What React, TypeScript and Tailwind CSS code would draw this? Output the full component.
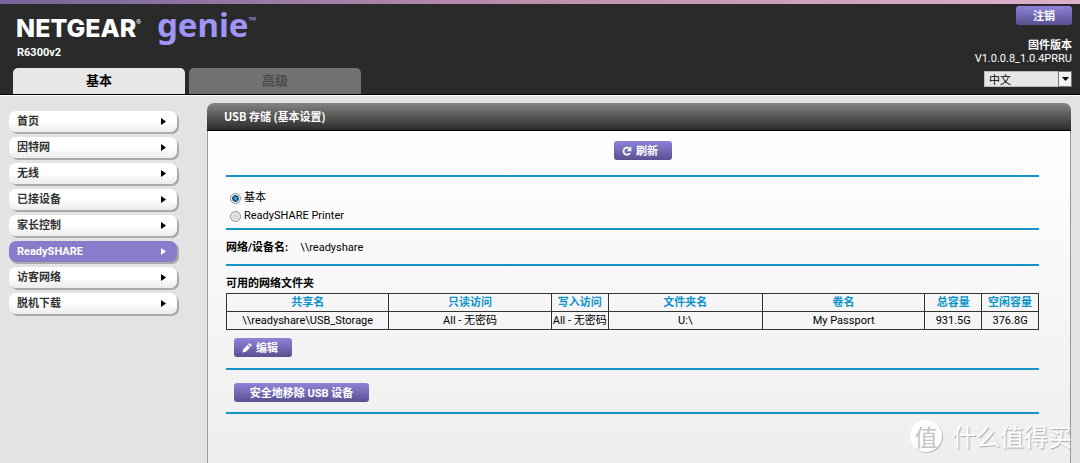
import { useState } from "react";
import type { ReactNode } from "react";
import clsx from "clsx";

type MenuItem = {
  id: string;
  label: string;
};

type Folder = {
  share: string;
  read: string;
  write: string;
  folder: string;
  volume: string;
  total: string;
  free: string;
};

const menuItems: MenuItem[] = [
  { id: "home", label: "首页" },
  { id: "internet", label: "因特网" },
  { id: "wireless", label: "无线" },
  { id: "devices", label: "已接设备" },
  { id: "parental", label: "家长控制" },
  { id: "readyshare", label: "ReadySHARE" },
  { id: "guest", label: "访客网络" },
  { id: "downloader", label: "脱机下载" },
];

const columns: { key: keyof Folder; label: string; width: string }[] = [
  { key: "share", label: "共享名", width: "w-[20%]" },
  { key: "read", label: "只读访问", width: "w-[20%]" },
  { key: "write", label: "写入访问", width: "w-[7%]" },
  { key: "folder", label: "文件夹名", width: "w-[19%]" },
  { key: "volume", label: "卷名", width: "w-[20%]" },
  { key: "total", label: "总容量", width: "w-[7%]" },
  { key: "free", label: "空闲容量", width: "w-[7%]" },
];

const folders: Folder[] = [
  {
    share: "\\\\readyshare\\USB_Storage",
    read: "All - 无密码",
    write: "All - 无密码",
    folder: "U:\\",
    volume: "My Passport",
    total: "931.5G",
    free: "376.8G",
  },
];

const RefreshIcon = () => (
  <svg className="size-[10px]" viewBox="0 0 10 10" fill="none">
    <path
      d="M8 7.300A3.600 3.600 0 1 1 7.300 2.300"
      stroke="#fff"
      strokeWidth="1.8"
    />
    <path d="M9.400.4v4.800H4.600z" fill="#fff" />
  </svg>
);

const PencilIcon = () => (
  <svg className="size-[10px]" viewBox="0 0 10 10" fill="#fff">
    <path d="M.4 9.600l.9-3.400L5.500 2l2.500 2.500L3.800 8.700z" />
    <path d="M6.200 1.300L7.500 0l2.500 2.500L8.700 3.800z" />
  </svg>
);

const Button = ({
  className,
  children,
}: {
  className?: string;
  children: ReactNode;
}) => (
  <button
    className={clsx(
      "flex h-[19px] items-center gap-1 rounded-[3px] bg-linear-to-b from-[#8f83d8] to-[#5a5192] pt-px text-[11px] leading-none font-bold text-white",
      className
    )}
  >
    {children}
  </button>
);

const Divider = () => <hr className="h-[2px] border-0 bg-[#1594c8]" />;

const Header = () => (
  <header className="flex h-[91px] justify-between border-b border-black bg-[#2a2a2a] text-white">
    <div className="flex flex-col justify-between">
      <div className="pl-4">
        <div className="flex h-[42px] items-baseline gap-4 leading-[42px]">
          <span className="flex font-[Inter] text-[25px] font-extrabold">
            NETGEAR
            <sup className="top-0 self-start text-[7px] leading-8">®</sup>
          </span>
          <span className="flex font-['Noto_Sans'] text-[33px] font-bold text-[#9f95f7]">
            genie
            <sup className="top-0 self-start text-[10px] leading-8">™</sup>
          </span>
        </div>
        <div className="pl-px text-[11px] leading-[14px] font-bold">
          R6300v2
        </div>
      </div>
      <nav className="flex gap-1 pl-[13px] text-[13px] font-bold">
        <button className="h-[26px] w-[172px] rounded-t-[5px] bg-[#e6e7e6] text-black">
          基本
        </button>
        <button className="h-[26px] w-[172px] rounded-t-[5px] bg-[#707270] text-[#4c4d4c]">
          高级
        </button>
      </nav>
    </div>
    <div className="flex flex-col items-end pt-[2px] pr-2 text-[11px]">
      <Button className="w-14 justify-center">注销</Button>
      <div className="pt-[14px] leading-[13px] font-bold">固件版本</div>
      <div className="leading-[13px]">V1.0.0.8_1.0.4PRRU</div>
      <div className="relative mt-[6px]">
        <select
          aria-label="语言"
          className="block h-4 w-[88px] appearance-none border border-[#bbb] bg-[#e6e6e6] pl-1 font-['Noto_Sans_CJK_SC',sans-serif] text-[11px] leading-[14px] text-black"
        >
          <option>中文</option>
          <option>English</option>
        </select>
        <span className="pointer-events-none absolute inset-y-0 right-0 flex w-[14px] items-center justify-center border border-[#777] bg-[#f2f2f2]">
          <svg className="h-[4px] w-[7px]" viewBox="0 0 7 4">
            <path d="M0 0h7L3.500 4z" />
          </svg>
        </span>
      </div>
    </div>
  </header>
);

const Sidebar = ({
  active,
  onSelect,
}: {
  active: string;
  onSelect: (id: string) => void;
}) => (
  <aside className="w-[207px] shrink-0 pt-[15px] pl-[9px]">
    <ul className="flex w-[168px] flex-col gap-[5px]">
      {menuItems.map(({ id, label }) => (
        <li key={id}>
          <button
            onClick={() => onSelect(id)}
            className={clsx(
              "flex h-[21px] w-full items-center justify-between rounded-[7px] pr-[11px] pl-2 text-[11px] leading-none font-bold shadow-[2px_2px_0_#aaa]",
              id === active
                ? "bg-[#887dca] text-white"
                : "bg-linear-to-b from-white from-50% to-[#ececec] text-[#333]"
            )}
          >
            {label}
            <svg
              className={clsx(
                "h-[7px] w-[5px]",
                id === active ? "fill-white" : "fill-black"
              )}
              viewBox="0 0 5 7"
            >
              <path d="M0 0l5 3.500L0 7z" />
            </svg>
          </button>
        </li>
      ))}
    </ul>
  </aside>
);

const FolderTable = () => (
  <table className="w-full table-fixed border-collapse text-center leading-[17px]">
    <thead>
      <tr>
        {columns.map(({ key, label, width }) => (
          <th
            key={key}
            className={clsx(
              "border border-[#333] p-0 whitespace-nowrap text-[#0d93cc]",
              width
            )}
          >
            {label}
          </th>
        ))}
      </tr>
    </thead>
    <tbody>
      {folders.map((folder) => (
        <tr key={folder.share}>
          {columns.map(({ key }) => (
            <td
              key={key}
              className="border border-[#333] p-0 whitespace-nowrap"
            >
              {folder[key]}
            </td>
          ))}
        </tr>
      ))}
    </tbody>
  </table>
);

const Radio = ({
  label,
  checked,
  onChange,
}: {
  label: string;
  checked: boolean;
  onChange: () => void;
}) => (
  <label className="flex h-[18px] items-center gap-[3px] pl-1">
    <input
      type="radio"
      name="mode"
      checked={checked}
      onChange={onChange}
      className="size-[11px] appearance-none rounded-full border border-[#8e8f8f] bg-[#dcdcdc] shadow-[inset_0_0_0_1px_#f4f4f4] checked:bg-[radial-gradient(circle,#58c4ee_0,#123f6b_3px,#f4f4f4_4px)]"
    />
    {label}
  </label>
);

const Watermark = () => (
  <div className="absolute right-2 bottom-[9px] flex items-center gap-[10px] font-['Noto_Sans_CJK_SC',sans-serif] text-white">
    <span className="flex size-8 items-center justify-center rounded-full bg-white text-[23px] leading-none text-[#c4c4c4] shadow-[1px_1px_1px_#bbb]">
      值
    </span>
    <span className="text-[24px] leading-9 [text-shadow:1px_1px_1px_#aaa]">
      什么值得买
    </span>
  </div>
);

const App = () => {
  const [active, setActive] = useState<string>("readyshare");
  const [mode, setMode] = useState<string>("basic");

  return (
    <div className="relative flex min-h-screen flex-col bg-[#e3e3e3] font-[Roboto,'Noto_Sans_CJK_SC',sans-serif] text-[11px] text-black">
      <div className="h-1 bg-linear-to-r from-[#75659a] via-[#c08fae] to-[#dcb2ca]" />
      <Header />
      <div className="flex flex-1 border-t border-white">
        <Sidebar active={active} onSelect={setActive} />
        <main className="mt-[7px] mr-[9px] flex flex-1 flex-col">
          <h1 className="h-7 rounded-t-[7px] border-b border-black bg-linear-to-b from-[#858585] to-[#2c2c2c] pl-[17px] font-['Noto_Sans_CJK_SC',sans-serif] leading-[26px] font-bold text-white">
            USB 存储 (基本设置)
          </h1>
          <div className="flex-1 border-x border-[#999] bg-linear-to-b from-white to-[#eee] pt-[10px] pr-[31px] pl-[18px]">
            <div className="flex justify-center pb-[15px] pl-[21px]">
              <Button className="w-[58px] pl-2">
                <RefreshIcon />
                刷新
              </Button>
            </div>
            <Divider />
            <div className="pt-3 pb-[3px]">
              <Radio
                label="基本"
                checked={mode === "basic"}
                onChange={() => setMode("basic")}
              />
              <Radio
                label="ReadySHARE Printer"
                checked={mode === "printer"}
                onChange={() => setMode("printer")}
              />
            </div>
            <Divider />
            <div className="flex h-[34px] items-center gap-3 pt-[2px]">
              <span className="font-bold">网络/设备名:</span>
              <span>\\readyshare</span>
            </div>
            <Divider />
            <div className="pt-[9px] pb-[11px]">
              <h2 className="leading-[18px] font-bold">可用的网络文件夹</h2>
              <FolderTable />
              <div className="pt-2 pl-2">
                <Button className="w-[58px] pl-2">
                  <PencilIcon />
                  编辑
                </Button>
              </div>
            </div>
            <Divider />
            <div className="pt-[13px] pb-[10px] pl-2">
              <Button className="w-[135px] justify-center">
                安全地移除 USB 设备
              </Button>
            </div>
            <Divider />
          </div>
        </main>
      </div>
      <Watermark />
    </div>
  );
};

export default App;
